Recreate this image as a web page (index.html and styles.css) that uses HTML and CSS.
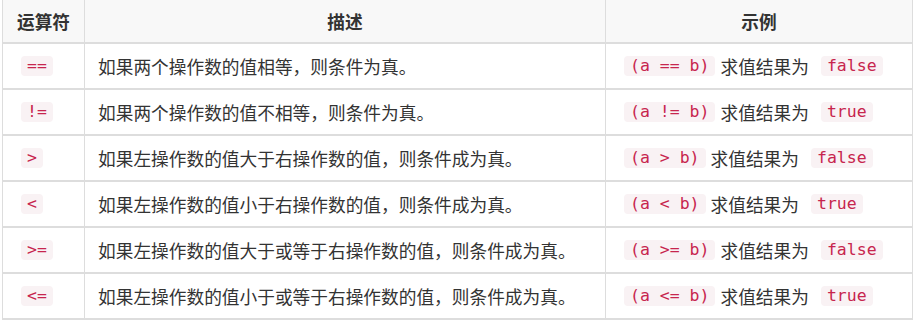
FILE: index.html
```html
<!DOCTYPE html>
<html lang="zh">
<head>
<meta charset="utf-8">
<title>运算符</title>
<link rel="stylesheet" href="styles.css">
</head>
<body>
<table class="ops">
  <colgroup>
    <col class="c1">
    <col class="c2">
    <col class="c3">
  </colgroup>
  <thead>
    <tr><th>运算符</th><th>描述</th><th>示例</th></tr>
  </thead>
  <tbody>
    <tr>
      <td><div class="cell"><code>==</code></div></td>
      <td><div class="cell">如果两个操作数的值相等，则条件为真。</div></td>
      <td><div class="cell"><code>(a == b)</code><span class="t">求值结果为</span><code class="r">false</code></div></td>
    </tr>
    <tr>
      <td><div class="cell"><code>!=</code></div></td>
      <td><div class="cell">如果两个操作数的值不相等，则条件为真。</div></td>
      <td><div class="cell"><code>(a != b)</code><span class="t">求值结果为</span><code class="r">true</code></div></td>
    </tr>
    <tr>
      <td><div class="cell"><code>&gt;</code></div></td>
      <td><div class="cell">如果左操作数的值大于右操作数的值，则条件成为真。</div></td>
      <td><div class="cell"><code>(a &gt; b)</code><span class="t">求值结果为</span><code class="r">false</code></div></td>
    </tr>
    <tr>
      <td><div class="cell"><code>&lt;</code></div></td>
      <td><div class="cell">如果左操作数的值小于右操作数的值，则条件成为真。</div></td>
      <td><div class="cell"><code>(a &lt; b)</code><span class="t">求值结果为</span><code class="r">true</code></div></td>
    </tr>
    <tr>
      <td><div class="cell"><code>&gt;=</code></div></td>
      <td><div class="cell">如果左操作数的值大于或等于右操作数的值，则条件成为真。</div></td>
      <td><div class="cell"><code>(a &gt;= b)</code><span class="t">求值结果为</span><code class="r">false</code></div></td>
    </tr>
    <tr>
      <td><div class="cell"><code>&lt;=</code></div></td>
      <td><div class="cell">如果左操作数的值小于或等于右操作数的值，则条件成为真。</div></td>
      <td><div class="cell"><code>(a &lt;= b)</code><span class="t">求值结果为</span><code class="r">true</code></div></td>
    </tr>
  </tbody>
</table>
</body>
</html>
```
FILE: styles.css
```css
html, body {
  margin: 0;
  padding: 0;
  background: #fff;
}
body {
  font-family: "Noto Sans CJK SC", "Noto Sans", sans-serif;
  font-size: 17.7px;
  color: #333;
}
.ops {
  margin-left: 2px;
  width: 911px;
  table-layout: fixed;
  border-collapse: separate;
  border-spacing: 0;
}
.ops .c1 { width: 83px; }
.ops .c2 { width: 521px; }
.ops .c3 { width: 307px; }
.ops th,
.ops td {
  box-sizing: border-box;
  border-right: 1px solid #dddddd;
  border-bottom: 2px solid #dddddd;
  white-space: nowrap;
}
.ops th:first-child,
.ops td:first-child {
  border-left: 1px solid #dddddd;
}
.ops th {
  background: #f8f8f8;
  font-weight: bold;
  text-align: center;
  padding: 0 13px;
  height: 44px;
  line-height: 24px;
  color: #333;
}
.ops td {
  padding: 0 13px;
  text-align: left;
  vertical-align: middle;
}
.cell {
  display: flex;
  align-items: center;
  height: 44px;
  line-height: 24px;
}
.ops code {
  display: block;
  font-family: "DejaVu Sans Mono", "Liberation Mono", monospace;
  font-size: 16.5px;
  line-height: 20px;
  padding: 0 6px;
  margin: 0 5px;
  color: #c7254e;
  background: #f9f2f4;
  border-radius: 4px;
}
.ops code.r {
  margin-left: 12px;
}
```
